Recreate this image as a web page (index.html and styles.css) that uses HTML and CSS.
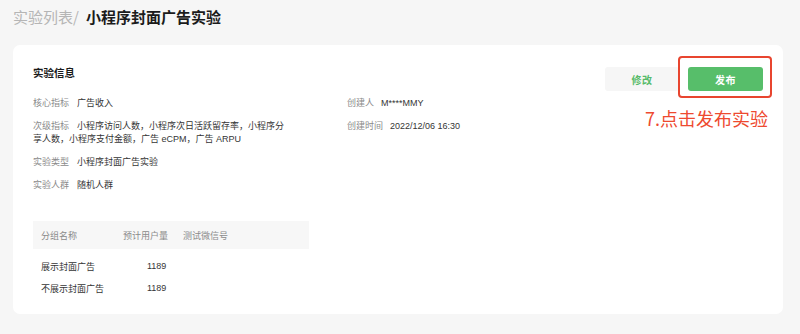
FILE: index.html
```html
<!DOCTYPE html>
<html lang="zh-CN">
<head>
<meta charset="utf-8">
<title>小程序封面广告实验</title>
<link rel="stylesheet" href="styles.css">
</head>
<body>
<div class="page">
  <div class="crumb"><span class="crumb-parent">实验列表/</span><span class="crumb-current">小程序封面广告实验</span></div>
  <div class="card">
    <div class="card-head">
      <div class="card-title">实验信息</div>
      <div class="actions">
        <button class="btn btn-edit">修改</button>
        <button class="btn btn-publish">发布</button>
      </div>
    </div>
    <div class="info">
      <div class="info-col left">
        <div class="row"><span class="label">核心指标</span><span class="value">广告收入</span></div>
        <div class="row"><span class="label">次级指标</span><span class="value">小程序访问人数，小程序次日活跃留存率，小程序分享人数，小程序支付金额，广告 eCPM，广告 ARPU</span></div>
        <div class="row"><span class="label">实验类型</span><span class="value">小程序封面广告实验</span></div>
        <div class="row"><span class="label">实验人群</span><span class="value">随机人群</span></div>
      </div>
      <div class="info-col right">
        <div class="row"><span class="label">创建人</span><span class="value">M****MMY</span></div>
        <div class="row"><span class="label">创建时间</span><span class="value">2022/12/06 16:30</span></div>
      </div>
    </div>
    <div class="table">
      <div class="thead">
        <span>分组名称</span><span>预计用户量</span><span>测试微信号</span>
      </div>
      <div class="tbody">
        <div class="tr"><span>展示封面广告</span><span class="num">1189</span><span></span></div>
        <div class="tr"><span>不展示封面广告</span><span class="num">1189</span><span></span></div>
      </div>
    </div>
    <div class="mark-box"></div>
    <div class="mark-text">7.点击发布实验</div>
  </div>
</div>
</body>
</html>
```
FILE: styles.css
```css
html, body {
  margin: 0;
  padding: 0;
  background: #f6f6f6;
  font-family: "Liberation Sans", "Noto Sans CJK SC", sans-serif;
}
.page {
  padding: 7px 17px 0 13px;
}
.crumb {
  font-size: 15px;
  line-height: 20px;
  height: 20px;
  font-family: "Noto Sans CJK SC", sans-serif;
}
.crumb-parent {
  color: #b5b5b5;
  margin-right: 7px;
}
.crumb-current {
  color: #1b1b1b;
  font-weight: 700;
}
.card {
  position: relative;
  margin-top: 18px;
  background: #fff;
  border-radius: 7px;
  padding: 21px 20px 15px 20px;
}
.card-head {
  display: flex;
  justify-content: space-between;
  align-items: flex-start;
}
.card-title {
  font-size: 10.5px;
  line-height: 14px;
  font-weight: 700;
  color: #1b1b1b;
  font-family: "Noto Sans CJK SC", sans-serif;
}
.actions {
  display: flex;
  gap: 9px;
  margin-top: 1px;
}
.btn {
  width: 75px;
  height: 24px;
  border: none;
  border-radius: 3px;
  font-size: 10px;
  font-weight: 700;
  font-family: "Noto Sans CJK SC", sans-serif;
  padding: 0;
  letter-spacing: 0.5px;
}
.btn-edit {
  background: #f6f6f6;
  color: #57bb6a;
  width: 74px;
}
.btn-publish {
  background: #57be6a;
  color: #fff;
}
.info {
  display: grid;
  grid-template-columns: 314px 1fr;
  margin-top: 6px;
}
.info-col.left {
  width: 256px;
}
.row {
  font-size: 9px;
  line-height: 13px;
  margin-bottom: 10px;
}
.label {
  color: #8a8a8a;
  margin-right: 8px;
}
.right .label {
  margin-right: 7px;
}
.value {
  color: #353535;
}
.table {
  width: 276px;
  margin-top: 19px;
  font-size: 9px;
}
.thead, .tr {
  display: grid;
  grid-template-columns: 82px 60px 1fr;
  padding-left: 8px;
  align-items: center;
}
.thead {
  background: #f7f7f7;
  height: 28px;
  color: #8a8a8a;
}
.tbody {
  padding-top: 6px;
}
.tr {
  height: 22px;
  color: #353535;
}
.num {
  padding-left: 24px;
}
.mark-box {
  position: absolute;
  left: 665px;
  top: 11px;
  width: 90px;
  height: 38px;
  border: 2px solid #e8452f;
  border-radius: 4px;
}
.mark-text {
  position: absolute;
  right: 15px;
  top: 62px;
  font-size: 18px;
  line-height: 22px;
  color: #ee4a30;
  font-family: "Noto Sans CJK SC", sans-serif;
}
```
